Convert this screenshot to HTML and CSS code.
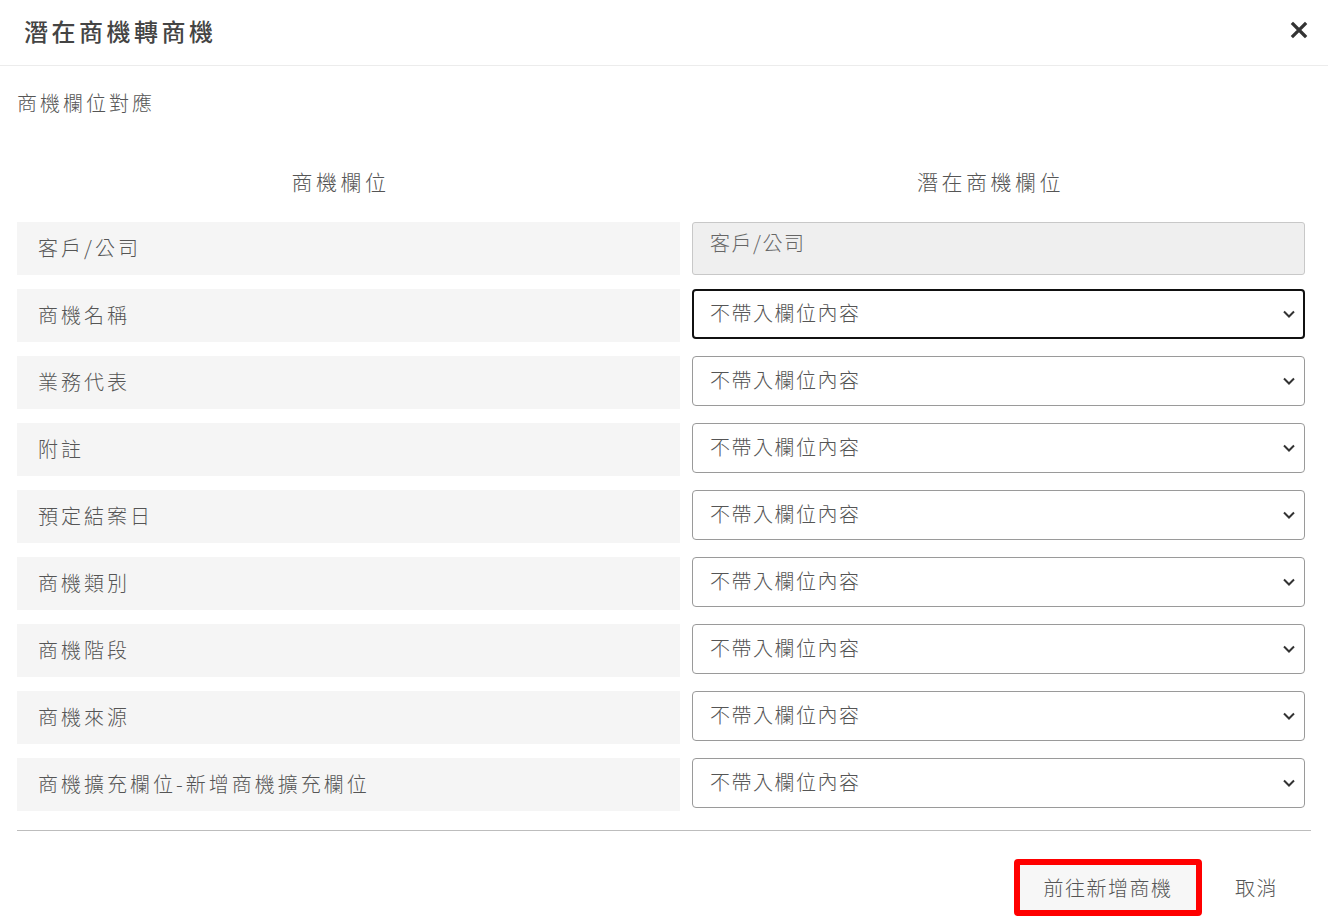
FILE: index.html
```html
<!DOCTYPE html>
<html>
<head>
  <meta charset="utf-8">
  <link rel="stylesheet" href="styles.css">
</head>
<body>
  <div class="modal">
    <div class="modal-header">
      <h2 class="modal-title">潛在商機轉商機</h2>
      <button class="close-button" aria-label="close">
        <svg width="18" height="18" viewBox="0 0 18 18">
          <path d="M3 3L15 15M15 3L3 15" stroke="#333" stroke-width="3.2" stroke-linecap="square"/>
        </svg>
      </button>
    </div>

    <div class="modal-body">
      <div class="section-title">商機欄位對應</div>

      <div class="field-grid">
        <div class="col-head">商機欄位</div>
        <div class="col-head">潛在商機欄位</div>

        <div class="field-name">客戶/公司</div>
        <div class="field-static">客戶/公司</div>

        <div class="field-name">商機名稱</div>
        <div class="select-wrap">
          <select class="field-select focused"><option>不帶入欄位內容</option></select>
          <svg class="chevron" width="14" height="14" viewBox="0 0 14 14"><path d="M2 4.5L7 9.5L12 4.5" fill="none" stroke="#333" stroke-width="2"/></svg>
        </div>

        <div class="field-name">業務代表</div>
        <div class="select-wrap">
          <select class="field-select"><option>不帶入欄位內容</option></select>
          <svg class="chevron" width="14" height="14" viewBox="0 0 14 14"><path d="M2 4.5L7 9.5L12 4.5" fill="none" stroke="#333" stroke-width="2"/></svg>
        </div>

        <div class="field-name">附註</div>
        <div class="select-wrap">
          <select class="field-select"><option>不帶入欄位內容</option></select>
          <svg class="chevron" width="14" height="14" viewBox="0 0 14 14"><path d="M2 4.5L7 9.5L12 4.5" fill="none" stroke="#333" stroke-width="2"/></svg>
        </div>

        <div class="field-name">預定結案日</div>
        <div class="select-wrap">
          <select class="field-select"><option>不帶入欄位內容</option></select>
          <svg class="chevron" width="14" height="14" viewBox="0 0 14 14"><path d="M2 4.5L7 9.5L12 4.5" fill="none" stroke="#333" stroke-width="2"/></svg>
        </div>

        <div class="field-name">商機類別</div>
        <div class="select-wrap">
          <select class="field-select"><option>不帶入欄位內容</option></select>
          <svg class="chevron" width="14" height="14" viewBox="0 0 14 14"><path d="M2 4.5L7 9.5L12 4.5" fill="none" stroke="#333" stroke-width="2"/></svg>
        </div>

        <div class="field-name">商機階段</div>
        <div class="select-wrap">
          <select class="field-select"><option>不帶入欄位內容</option></select>
          <svg class="chevron" width="14" height="14" viewBox="0 0 14 14"><path d="M2 4.5L7 9.5L12 4.5" fill="none" stroke="#333" stroke-width="2"/></svg>
        </div>

        <div class="field-name">商機來源</div>
        <div class="select-wrap">
          <select class="field-select"><option>不帶入欄位內容</option></select>
          <svg class="chevron" width="14" height="14" viewBox="0 0 14 14"><path d="M2 4.5L7 9.5L12 4.5" fill="none" stroke="#333" stroke-width="2"/></svg>
        </div>

        <div class="field-name">商機擴充欄位-新增商機擴充欄位</div>
        <div class="select-wrap">
          <select class="field-select"><option>不帶入欄位內容</option></select>
          <svg class="chevron" width="14" height="14" viewBox="0 0 14 14"><path d="M2 4.5L7 9.5L12 4.5" fill="none" stroke="#333" stroke-width="2"/></svg>
        </div>
      </div>

      <div class="divider"></div>
    </div>

    <div class="modal-footer">
      <button class="btn btn-primary highlighted">前往新增商機</button>
      <button class="btn btn-text">取消</button>
    </div>
  </div>
</body>
</html>
```

FILE: styles.css
```css
body {
  margin: 0;
  background-color: #fff;
  font-family: "Noto Sans CJK TC", "Noto Sans", sans-serif;
  font-weight: 300;
  color: #555;
}

.modal {
  width: 1328px;
  background-color: #fff;
}

.modal-header {
  height: 66px;
  box-sizing: border-box;
  display: flex;
  align-items: center;
  justify-content: space-between;
  padding: 0 20px 5px 24px;
  border-bottom: 1px solid #ececec;
}

.modal-title {
  margin: 0;
  font-size: 24px;
  font-weight: 500;
  letter-spacing: 3.5px;
  color: #444;
}

.close-button {
  background: none;
  border: none;
  padding: 0;
  width: 18px;
  height: 18px;
  cursor: pointer;
  display: flex;
}

.modal-body {
  padding: 0 17px;
}

.section-title {
  padding-top: 23px;
  font-size: 20px;
  line-height: 28px;
  letter-spacing: 3px;
  color: #555;
}

.field-grid {
  display: grid;
  grid-template-columns: 663px 613px;
  column-gap: 12px;
  row-gap: 14px;
  margin-top: 49px;
}

.col-head {
  text-align: center;
  font-size: 21px;
  line-height: 30px;
  letter-spacing: 3.5px;
  color: #555;
  padding-right: 16px;
  margin-bottom: 12px;
}

.field-name {
  height: 53px;
  box-sizing: border-box;
  display: flex;
  align-items: center;
  padding: 0 0 3px 21px;
  background-color: #f5f5f5;
  font-size: 20px;
  letter-spacing: 3px;
  color: #555;
}

.field-static {
  height: 53px;
  box-sizing: border-box;
  padding: 6px 17px 0;
  background-color: #efefef;
  border: 1px solid #c8c8c8;
  border-radius: 3px;
  font-size: 20px;
  line-height: 28px;
  letter-spacing: 1.5px;
  color: #666;
}

.select-wrap {
  position: relative;
}

.field-select {
  appearance: none;
  -webkit-appearance: none;
  width: 100%;
  height: 50px;
  box-sizing: border-box;
  padding: 0 40px 3px 17px;
  background-color: #fff;
  border: 1px solid #9a9a9a;
  border-radius: 4px;
  font-family: "Noto Sans CJK TC", "Noto Sans", sans-serif;
  font-weight: 300;
  font-size: 20px;
  letter-spacing: 1.5px;
  color: #555;
}

.field-select.focused {
  border: 2px solid #111;
  padding-left: 16px;
}

.chevron {
  position: absolute;
  right: 9px;
  top: 18px;
  pointer-events: none;
}

.divider {
  height: 1px;
  background-color: #bdbdbd;
  margin-top: 19px;
}

.modal-footer {
  display: flex;
  justify-content: flex-end;
  align-items: center;
  gap: 17px;
  padding: 28px 34px 8px 0;
}

.btn {
  font-family: "Noto Sans CJK TC", "Noto Sans", sans-serif;
  font-weight: 300;
  font-size: 20px;
  letter-spacing: 1.5px;
  color: #555;
  cursor: pointer;
  border: none;
  background: none;
}

.btn-primary {
  width: 188px;
  height: 57px;
  background-color: #f7f7f7;
  border-radius: 3px;
}

.btn-primary.highlighted {
  border: 6px solid #f00;
  border-radius: 4px;
}

.btn-text {
  padding: 0 16px;
  height: 45px;
}
```
